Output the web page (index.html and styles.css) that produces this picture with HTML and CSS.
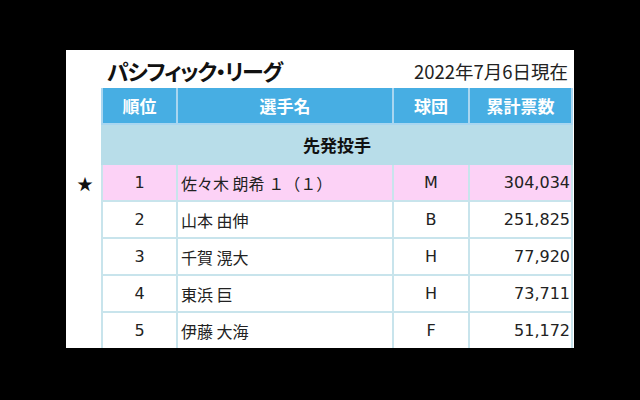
FILE: index.html
```html
<!DOCTYPE html>
<html lang="ja">
<head>
<meta charset="utf-8">
<link rel="stylesheet" href="styles.css">
</head>
<body>
<div class="screen">
  <div class="panel">
    <div class="titlebar">
      <div class="title">パシフィック・リーグ</div>
      <div class="date">2022年7月6日現在</div>
    </div>
    <table class="ranking">
      <colgroup>
        <col class="c-star"><col class="c-rank"><col class="c-name"><col class="c-team"><col class="c-votes">
      </colgroup>
      <thead>
        <tr class="head">
          <td class="mark"></td><th>順位</th><th>選手名</th><th>球団</th><th>累計票数</th>
        </tr>
      </thead>
      <tbody>
        <tr class="section">
          <td class="mark"></td><td colspan="4">先発投手</td>
        </tr>
        <tr class="top">
          <td class="mark">★</td><td class="rank">1</td><td class="name">佐々木 朗希 １（１）</td><td class="team">M</td><td class="votes">304,034</td>
        </tr>
        <tr>
          <td class="mark"></td><td class="rank">2</td><td class="name">山本 由伸</td><td class="team">B</td><td class="votes">251,825</td>
        </tr>
        <tr>
          <td class="mark"></td><td class="rank">3</td><td class="name">千賀 滉大</td><td class="team">H</td><td class="votes">77,920</td>
        </tr>
        <tr>
          <td class="mark"></td><td class="rank">4</td><td class="name">東浜 巨</td><td class="team">H</td><td class="votes">73,711</td>
        </tr>
        <tr>
          <td class="mark"></td><td class="rank">5</td><td class="name">伊藤 大海</td><td class="team">F</td><td class="votes">51,172</td>
        </tr>
      </tbody>
    </table>
  </div>
</div>
</body>
</html>
```
FILE: styles.css
```css
html, body {
  margin: 0;
  padding: 0;
  background: #000;
}
.screen {
  width: 640px;
  height: 400px;
  background: #000;
  padding-top: 50px;
  box-sizing: border-box;
}
.panel {
  margin-left: 66px;
  width: 508px;
  height: 298px;
  background: #fff;
  overflow: hidden;
  font-family: "DejaVu Sans", "Noto Sans CJK JP", sans-serif;
  color: #222;
}
.titlebar {
  height: 38px;
  display: flex;
  align-items: flex-end;
  justify-content: space-between;
  padding: 0 6px 0 41px;
  box-sizing: border-box;
}
.title {
  font-family: "Noto Sans CJK JP", sans-serif;
  font-weight: 700;
  font-size: 22px;
  line-height: 30px;
  font-feature-settings: "palt";
  letter-spacing: -1.4px;
  color: #111;
  padding-bottom: 3px;
}
.date {
  font-family: "Noto Sans CJK JP", sans-serif;
  font-size: 18.5px;
  line-height: 24px;
  color: #222;
  padding-bottom: 5px;
}
.ranking {
  border-collapse: collapse;
  table-layout: fixed;
  width: 506px;
  font-size: 16px;
}
.c-star { width: 36px; }
.c-rank { width: 75px; }
.c-name { width: 216px; }
.c-team { width: 76px; }
.c-votes { width: 103px; }
.ranking td, .ranking th {
  padding: 0;
  border: 2px solid #c8e4ec;
}
.ranking .mark {
  border: none;
  background: #fff;
  text-align: right;
  padding-right: 8px;
  font-family: "Noto Sans CJK JP", sans-serif;
  font-size: 16px;
  color: #111;
}
.head th {
  height: 35px;
  background: #47aee3;
  color: #fff;
  font-family: "Noto Sans CJK JP", sans-serif;
  font-weight: 700;
  font-size: 17px;
  border-color: #a9d6f0;
  border-top: none;
}
.section td {
  height: 40px;
  background: #b8dde9;
  text-align: center;
  font-family: "Noto Sans CJK JP", sans-serif;
  font-weight: 700;
  font-size: 17px;
  color: #111;
  border-color: #b8dde9;
}
.section td.mark { background: #fff; }
tbody tr td { height: 37px; box-sizing: border-box; }
.top td { background: #fcd2f6; }
.top td.mark { background: #fff; }
.rank, .team {
  text-align: center;
}
.name {
  text-align: left;
  padding-left: 3px !important;
  font-family: "Noto Sans CJK JP", sans-serif;
  white-space: nowrap;
}
.votes {
  text-align: right;
  padding-right: 1px !important;
}
.rank, .team, .votes {
  font-family: "DejaVu Sans", sans-serif;
  color: #222;
}
```
